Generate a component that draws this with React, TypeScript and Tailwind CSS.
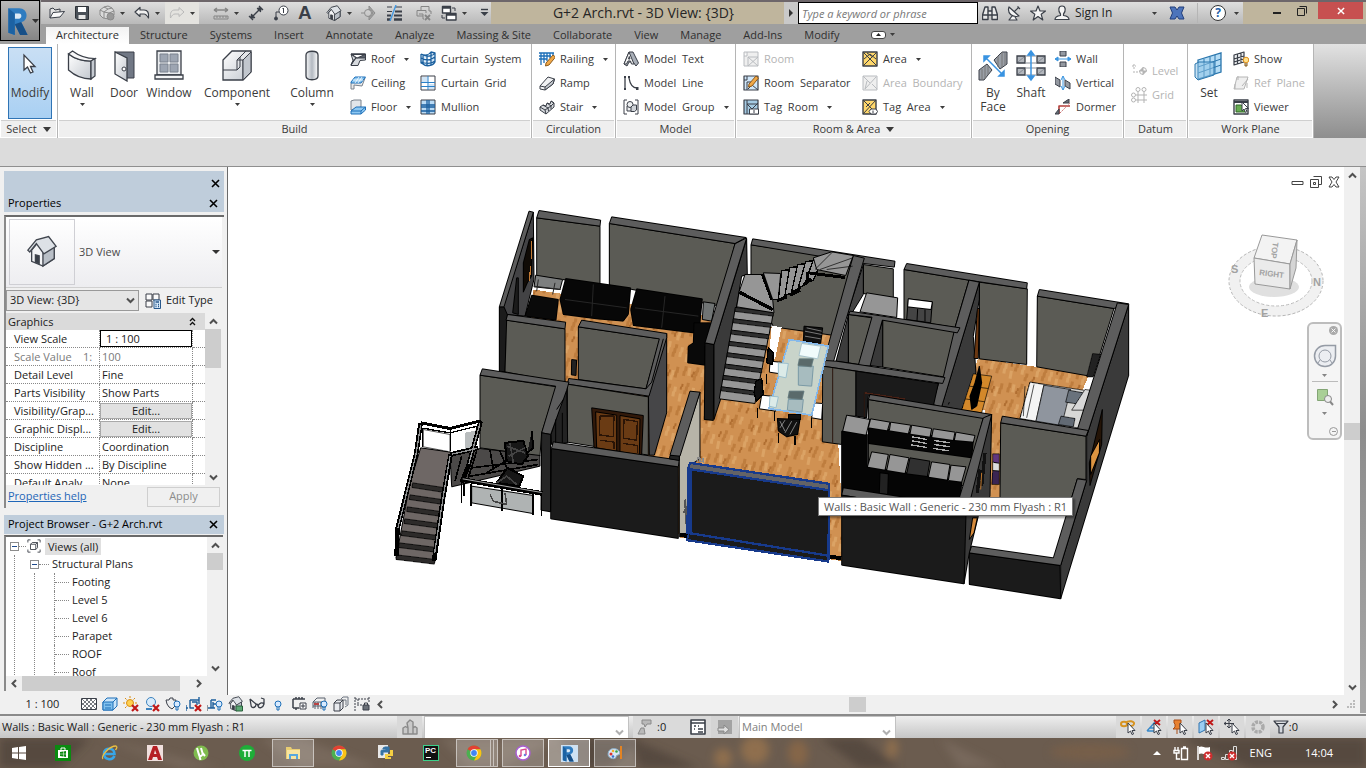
import React from "react";
import type { ReactNode } from "react";

/* ---------- icons ---------- */

const INK = "#3a3f48";
const BLUE = "#1d6fb8";

function Svg({ s = 16, vb = 16, children }: { s?: number; vb?: number; children: ReactNode }) {
  return (
    <svg width={s} height={s} viewBox={`0 0 ${vb} ${vb}`} fill="none" stroke={INK} strokeWidth={1} strokeLinejoin="round" className="shrink-0" aria-hidden="true">
      {children}
    </svg>
  );
}

const Caret = ({ className = "" }: { className?: string }) => (
  <svg width="5" height="3" viewBox="0 0 5 3" className={`shrink-0 ${className}`} aria-hidden="true">
    <path d="M0 0H5L2.5 3Z" fill="#3c3c3c" />
  </svg>
);

const XMark = ({ s = 9, c = "#000" }: { s?: number; c?: string }) => (
  <svg width={s} height={s} viewBox="0 0 9 9" className="shrink-0" aria-hidden="true">
    <path d="M1 1L8 8M8 1L1 8" stroke={c} strokeWidth="1.6" />
  </svg>
);

const Chevron = ({ dir, c = "#505050" }: { dir: "up" | "down" | "left" | "right"; c?: string }) => {
  const d = { up: "M1 6.5L4.5 3L8 6.5", down: "M1 2.5L4.5 6L8 2.5", left: "M6 1L2.5 4.5L6 8", right: "M3 1L6.5 4.5L3 8" }[dir];
  return (
    <svg width="9" height="9" viewBox="0 0 9 9" className="shrink-0" aria-hidden="true">
      <path d={d} fill="none" stroke={c} strokeWidth="2" />
    </svg>
  );
};

const house = (
  <>
    <path d="M3 8V14L9 16.5L15 12.5V6L8 2Z" fill="#f3f4f6" />
    <path d="M9 16.5V9.500L15 6V12.500Z" fill="#b9bfc7" />
    <path d="M1 8L5.500 2.500L12 .8L16 6L9.500 10L5.500 4.500L2 9Z" fill="#dde1e6" />
    <path d="M5 14.500V10.500L7 11V15.3Z" fill={INK} />
  </>
);
const redX = <path d="M9 9L15 15M15 9L9 15" stroke="#c01818" strokeWidth="2.200" />;
const bulb = (
  <>
    <circle cx="12" cy="8" r="3" fill="#d7eaff" stroke={BLUE} />
    <path d="M11 11V14H13V11" stroke={BLUE} />
  </>
);
const cursor = <path d="M8 4V14L10.500 12L12 15.500L13.500 15L12 11.500H15Z" fill="#fff" stroke={INK} />;
const pencil = <path d="M6 10L13 2L15.500 4L9 12L5.500 13Z" fill="#f0a848" stroke="#8d5a1c" />;

const I: Record<string, ReactNode> = {
  open: <><path d="M1 13V4L4 3L6 5L11 4V7" fill="#e4e4e4" /><path d="M1 13L4 7.500L15.500 6.500L11 12Z" fill="#fafafa" /></>,
  save: <><path d="M1.500 1.500H14.500V14.500H3L1.500 13Z" fill="#4a5058" stroke="#2e3238" /><path d="M4 2H12V7H4Z" fill="#fff" stroke="none" /><path d="M4.500 10H11.500V14H4.500Z" fill="#e8e8e8" stroke="none" /></>,
  sync: <g stroke="#8a8a8a"><path d="M1 5L5 2L9 1L13 3L15 6V10L10 14L4 13L1 10Z" fill="#dadada" /><path d="M1 5L5 7L9 4M5 7V13M5 7L10 8L15 6M10 8V14M9 4L13 3M9 4L5 2" /><circle cx="11.500" cy="11.500" r="3.500" fill="#999" /></g>,
  undo: <path d="M1 7L6 2.500V5H10C14 5 15 8 14.500 13C13 10.500 12 9 10 9H6V11.500Z" fill="#f0f0f0" strokeWidth="1.200" />,
  redo: <path d="M15 7L10 2.500V5H6C2 5 1 8 1.500 13C3 10.500 4 9 6 9H10V11.500Z" stroke="#b9b9b9" />,
  measure: <g stroke="#858585"><path d="M1 5H15M1 5L4 3M1 5L4 7M15 5L12 3M15 5L12 7" strokeWidth="1.500" /><path d="M1 11H15V14H1ZM4 11V13M7 11V13M10 11V13M13 11V13" /></g>,
  dim: <path d="M3 13L13 3M3 13L3.500 9.500L6.500 12.500ZM13 3L12.500 6.500L9.500 3.500ZM1 11L5 15M11 1L15 5" fill={INK} strokeWidth="1.300" />,
  tag: <><circle cx="10.500" cy="5.500" r="4.500" fill="#fff" /><path d="M9.500 4L10.500 3V8M6 7H3V12" /><circle cx="3" cy="13.500" r="1.500" fill={INK} /></>,
  house: <g transform="scale(.94)">{house}</g>,
  section: <g stroke="#8c8c8c"><circle cx="7" cy="8" r="3.500" /><path d="M0 8H3M8 1L14 8L8 15V11.500A3.500 3.500 0 0 0 8 4.500Z" fill="#a5a5a5" /></g>,
  thin: <><path d="M1 2H6M9 2H16M1 6.500H6" strokeWidth="1.200" /><path d="M9 6.500H16M1 10.500H5M8 10.500H16" strokeWidth="1.800" /><path d="M1 14.500H5M8 14.500H16" strokeWidth="2.600" /><path d="M10 0L4 16" stroke="#4398e2" strokeWidth="1.400" /></>,
  closewin: <g stroke="#858585"><path d="M5 5V1.500H13V6M1 5.500H10V8M1 5.500V11H7M3 9H7V14H8M13 6H15V9" /><path d="M9 10L14 15M14 10L9 15" strokeWidth="1.800" /></g>,
  switchwin: <><path d="M1.500 1.500H9.500V8H1.500ZM5.500 8.500H15V15H5.500ZM1.500 3H9.500M5.500 10H15" fill="#fff" strokeWidth="1.400" /><path d="M11 3H14V6M1 10V13H4" /></>,
  qat: <><path d="M5 4.500H12" strokeWidth="1.400" /><path d="M4.500 7H12.500L8.500 11Z" fill={INK} stroke="none" /></>,
  bino: <path d="M3 2H6V6H10V2H13L15.500 10V14.500H10V10H6V14.500H.5V10ZM.5 10H6M10 10H15.500M6 6V10M10 6V10" fill="#e8e8e8" strokeWidth="1.400" />,
  dish: <path d="M3 2C1 8 6 13 13 11ZM8 7L13 2M11.500 1.500L14 4M6 11L3 15H11L9 12" fill="#f5f5f5" strokeWidth="1.200" />,
  star: <path d="M8 1L10 6H15.500L11.200 9.300L12.800 15L8 11.500L3.200 15L4.800 9.300L.5 6H6Z" fill="#f4f4f4" strokeWidth="1.200" />,
  user: <path d="M8 1C4 1 4 6 6.500 9V10.500C3 11 1 12 1 14.500H15C15 12 13 11 9.500 10.500V9C12 6 12 1 8 1Z" fill="#f5f5f5" strokeWidth="1.200" />,
  exchange: <path d="M1 2H6L8 5L10 2H15L12.500 8L15 14H10L8 11L6 14H1L3.500 8Z" fill="#4d74bb" stroke="#233f7c" />,
  roof: <><path d="M1 3H15.500V9L10 9.500L8 14.500H1L3 9.500Z" fill="#d7dade" /><path d="M1 3L6 7H15.500V3ZM6 7L3 9.500L1 14Z" fill="#5b626d" /><path d="M2 3.500L7 7L15 3.500Z" fill="#fff" /></>,
  ceiling: <><path d="M1 8V14H4V10L12 11L15 3" fill="#e9e9e9" stroke="#7b828c" /><path d="M1 7L5 2H15.500L11 8H1Z" fill="#8ec8f2" stroke={BLUE} /><path d="M3 5H13M5 8L9 2M8 8L12 2" stroke="#fff" strokeWidth=".8" /></>,
  floor: <><path d="M1 2L4 1H11V8L1 11Z" fill="#e2e5e9" stroke="#7b828c" /><path d="M1 12L6 8H15.500V11L11 15H1Z" fill="#8ec8f2" stroke={BLUE} /><path d="M1 12H11L15.500 8M11 12V15" stroke={BLUE} /></>,
  curtain: <path d="M1 3C5 5 9 4 11 1L15 2V11C13 15 6 16 3 13V4M1 3V12L3 13M7 4V14.500M11 1V14M1 7C6 10 11 9 15 6M1 11C6 13 11 13 15 10M3 4C8 6 13 5 15 2" fill="#d3e7f8" stroke="#1a5f9e" strokeWidth="1.300" />,
  cgrid: <><path d="M1 1H15V15H1Z" fill="#fff" /><path d="M2 2H7.500V7.500H2ZM9 9H14V14H9Z" fill="#cfe4f6" stroke="none" /><path d="M8 1V15M1 7.500H15M1 11.500H15" stroke="#2a80c8" /></>,
  mullion: <><path d="M1 1H15V15H1Z" fill="#b9dbf6" /><path d="M7 1V15M9 1V15M1 6H15M1 8H15M1 12H15" stroke="#1a5f9e" strokeWidth="1.300" /></>,
  railing: <><path d="M0 2H15M0 5H12M2 2V14M5 2V12M8 2V10M11 2V7M14 2V5M0 8H8" stroke={BLUE} strokeWidth="1.300" /><g transform="translate(1,2)">{pencil}</g></>,
  ramp: <><path d="M1 11L9 2L15.500 4L14 9L6 15L1 14Z" fill="#f0f1f3" /><path d="M1 11L6 12V15L14 9L15.500 4L6 12" fill="#c5c9cf" /></>,
  stair: <><path d="M1 8L4 6L7 7L8 4L11 5L12 2L15 4V8L7 15L1 11Z" fill="#d7dade" /><path d="M1 8L6 11L7 15M4 6L9 9M6 11L9 9L9.500 12M8 4L12 7M9 9L12 7M12 2L15 4L12 7V10" /></>,
  mtext: <><path d="M6 1H10L15.500 12L13 15L10 11H6L4 15L1 13Z" fill="#a9afb8" /><path d="M1 13L6 1L11 13H8.500L7.500 10H5L3.500 13ZM5.500 8H7L6.300 5.500Z" fill="#f5f5f5" /></>,
  mline: <><path d="M2 3V13M6 3C7 9 9 13 14 13" strokeWidth="1.300" /><path d="M1 1H3V3H1ZM1 13H3V15H1ZM5 1H7V3H5ZM13 12H15.500V15H13Z" fill={INK} stroke="none" /></>,
  mgroup: <><path d="M4 1H1V15H4M12 1H15V15H12" /><path d="M4 7H9V12H4Z" fill="#eceef0" /><circle cx="7" cy="5.500" r="3" fill="#eceef0" /><path d="M8 8L10 6H13.500V11L11.500 12.500H8Z" fill="#cfd3d8" /></>,
  roomoff: <g stroke="#b9bcc0"><path d="M1 1H15V15H1ZM1 5H4V1M5 6H15M5 6V15M5 6L15 15M15 6L5 15" fill="#efefef" /></g>,
  roomsep: <><path d="M1 1H15V15H1Z" fill="#cfe6f9" strokeWidth="1.200" /><path d="M4 1V5H1M4 7V15M4 7H8M5 14L9 10L15 15" /><g transform="translate(0,-1)">{pencil}</g></>,
  tagroom: <><path d="M1 1H15V15H1Z" fill="#a5cbe3" strokeWidth="1.200" /><path d="M4 1V15M4 5H15M4 5L9 10L15 4" /><path d="M6.500 10H15.500V15H6.500Z" fill="#fff" /><path d="M11 11V14" /></>,
  area: <><path d="M1 1H15V15H1Z" fill="#ffd76b" strokeWidth="1.400" /><path d="M1 1L15 15M15 1L1 15M5 2L11 6M2 8L8 3L14 8" /></>,
  areab: <g stroke="#b9bcc0"><path d="M1 1H15V15H1ZM1 1L8 8M3 14L14 2M10 9L15 14M5 6L3 14" fill="#efefef" /></g>,
  tagarea: <><path d="M1 1H14V15H1Z" fill="#ffd76b" strokeWidth="1.400" /><path d="M1 1L14 14M14 1L1 15M4 8L8 4" /><path d="M9 10H14L15.500 12.500L14 15H9L7 12.500Z" fill="#fff" /><path d="M11 11.500V14" /></>,
  owall: <><path d="M5 0H11V5H5ZM5 11H11V16H5Z" fill="#9499a1" /><path d="M0 8H16M0 8L3 6V10ZM16 8L13 6V10Z" stroke="#3d96e0" fill="#3d96e0" /></>,
  overt: <><path d="M0 2L5 5V12L0 9ZM10 5L15 8V14L10 11Z" fill="#9499a1" /><path d="M8 1V15M6 5L8 1L10 5M6 11L8 15L10 11" stroke="#3d96e0" /></>,
  dormer: <><path d="M4 15V7H15" stroke="#b33f3b" strokeWidth="1.600" /><path d="M5 14L15 4" stroke="#c77" strokeDasharray="2 1" /><path d="M8 4L14 0V4ZM0 15L4 10V15Z" fill="#6a7078" /></>,
  level: <g stroke="#b3b3b3"><path d="M1 3H5M3 1V6M2 9H7" strokeDasharray="2 1" /><path d="M12 4.500L15.500 8L12 11.500L8.500 8Z" fill="#b3b3b3" /><path d="M12 8V4.500A3.500 3.500 0 0 1 15.500 8ZM12 8V11.500A3.500 3.500 0 0 1 8.500 8Z" fill="#fff" /></g>,
  grid: <g stroke="#b3b3b3"><circle cx="7" cy="2.500" r="2" /><circle cx="13" cy="2.500" r="2" /><circle cx="2.500" cy="8" r="2" /><circle cx="2.500" cy="13" r="2" /><path d="M7 5V16M13 5V16M5 8H16M5 13H16" /></g>,
  show: <><path d="M1 4L11 1V11L1 14ZM4.500 3V13M8 2V12M1 8L11 5M1 11L11 8" fill="#eceef0" strokeWidth="1.200" /><circle cx="13" cy="9" r="2.800" fill="#ffe08a" stroke="#dd8d18" /><path d="M12 12V15H14V12" fill="#ccc" stroke="#8a5a13" /></>,
  ref: <g stroke="#b5b5b5"><path d="M4 2H15L11 14H1Z" fill="#efefef" /><path d="M9 11L15 4M5 1V5M2 9V14M14 8V13" /></g>,
  viewer: <><path d="M1 1H15V15H1Z" fill="#fff" strokeWidth="1.400" /><path d="M1 3H15" strokeWidth="2" /><path d="M3 6H8L12 9V13H3Z" fill="#67ac51" stroke="#33682a" /><path d="M9 3V12L11 10L12.500 13.500L14 12.500L12.500 9.500H15.500Z" fill="#fff" /></>,
  etype: <><path d="M1 1H7V7H1ZM8 1H14V7H8ZM1 8H7V14H1Z" fill="#fafafa" /><path d="M9 7H15.500V15.500H9Z" fill="#d8eafa" stroke="#28588c" /><path d="M10.500 9H14M10.500 11.500H11.500M13 11.500H14M10.500 13.500H11.500M13 13.500H14" stroke="#28588c" strokeWidth="1.400" /></>,
  viewsall: <><path d="M1 4V1H4M12 1H15V4M15 12V15H12M4 15H1V12" /><path d="M4 6L6 4H12V10L10 12H4Z" fill="#fff" /><path d="M4 6H10V12M10 6L12 4" /></>,
  detail: <><path d="M.5 2.500H15.500V13.500H.5Z" fill="#fff" /><path d="M1 3L11 13M5 3L15 13M9 3L15 9M1 7L7 13M15 3L5 13M11 3L1 13M7 3L1 9M15 7L9 13" strokeWidth=".7" /></>,
  style: <><path d="M1 6L5 2H15V10L11 14H1Z" fill="#c9e5fa" stroke={BLUE} /><path d="M1 6H11V14H1Z" fill="#7fc0ee" stroke={BLUE} /><path d="M11 6L15 2M3 9H9M3 12H9" stroke={BLUE} /></>,
  sun: <><circle cx="7" cy="7" r="3.500" fill="#ffd04e" stroke="#d98d12" /><path d="M7 0V2M0 7H2M2 2L3.500 3.500M12 2L10.500 3.500M2 12L3.500 10.500M12 7H14" stroke="#d98d12" />{redX}</>,
  shadow: <><circle cx="7" cy="6" r="4.500" fill="#d7ebfb" stroke="#3c82be" /><path d="M2 13H8" stroke="#3c82be" strokeWidth="2" />{redX}</>,
  render: <><path d="M1 4H4L5 2H8V4H11L10 10L7 13L4 11L2 8Z" fill="#eceef0" />{bulb}</>,
  crop: <><path d="M4 4V12H8M0 12H2M4 4H13M13 1V8M0 9V15M6 6H11V9" stroke="#1d5f9c" strokeWidth="1.400" />{redX}</>,
  cropshow: <><path d="M4 4V12M1 12H8M4 4H9M6 6V12M6 8H9" strokeWidth="1.400" stroke="#1d5f9c" /><path d="M0 9V15" />{bulb}</>,
  lock3d: <><g transform="scale(.9)">{house}</g><path d="M8 10H14.500V15H8Z" fill="#5da875" stroke="#28603a" /></>,
  glasses: <path d="M1 3L7 8C7 12 2 13 2 9L1 3M7 8C9 8 9 9 9 10C10 13 14 12 15 8C13 6 10 7 9 10M15 8V3L12 2" strokeWidth="1.300" />,
  bulb: <g transform="translate(-4,0)">{bulb}</g>,
  analytic: <><path d="M2 3H14M2 12H8M2 3V12M5 3V1M8 3V1M11 3V1M5 12V14" strokeWidth="1.500" /><path d="M9 7H15V13H9ZM11 9H13V11H11Z" fill="#fff" /></>,
  worksh: <><path d="M1 6L5 2H13V12M1 6H11V12M1 10H11M3 6V13M6 6V13M9 6V13M1 6V12" stroke="#58606c" /><path d="M2 8H7" stroke="#bb4242" strokeWidth="2" />{bulb}</>,
  displace: <><path d="M8 3L10 1H15V9L12 11M10 4H13V9" stroke="#6e7682" /><path d="M1 7L4 4H10V12L7 15H1ZM1 7H7V15M7 7L10 4" fill="#e8eaee" /></>,
  reveal: <><path d="M1 1V15M15 1V6M1 3H15M4 8V3M3 9H8" strokeDasharray="2 1" /><path d="M9 9H15V14H9Z" fill="#6b7078" /><path d="M10.500 9V7H13.500V9" /></>,
  design: <g stroke="#8a8a8a" fill="#c9c9c9"><path d="M1 9L3.500 7.500L6 9V15H1ZM5 4L8 1L11 3V15H6V9ZM11 9L13 7.500L15 9V15H11Z" strokeWidth="1.400" /></g>,
  marker: <g stroke="#8a8a8a"><path d="M5 1H14V5H10L8 8L7 5H5ZM1 15L4 9H7L8 15Z" fill="#b9b9b9" /></g>,
  listing: <><path d="M1 1H15V15H1ZM1 4H15" fill="#fff" strokeWidth="1.600" /><path d="M4 7H6M4 10H5M8 10H13M8 13H13M8 7H9" strokeWidth="1.500" /></>,
  addset: <><path d="M1 1H15V15H10" fill="#9b9b9b" stroke="none" /><path d="M1 1H15V15H1Z" fill="#a3a3a3" stroke="none" /><path d="M1 9H7V6L12 10.500L7 15V12H1Z" fill="#dedede" stroke="#888" /></>,
  link: <><path d="M1 5C1 2 7 2 7 5C7 8 1 8 1 5M6 4C8 1 15 2 14 5C13 8 8 7 8 5" stroke="#d79320" strokeWidth="2" />{cursor}</>,
  under: <><path d="M1 12L9 3V8M1 12H9M4 9H9" stroke="#3989c9" strokeWidth="1.400" /><path d="M8 1L14 6M14 1L8 6" stroke="#c01818" strokeWidth="2" />{cursor}</>,
  pin: <><path d="M2 1H9V4L8 5V8L10 10H1L3 8V5L2 4ZM5 10V15" fill="#e8812f" stroke="#a94c16" />{cursor}</>,
  face: <><path d="M1 4L7 1V11L1 14Z" fill="#9bcdf2" stroke="#3074b0" /><path d="M9 1L15 6M15 1L9 6" stroke="#c01818" strokeWidth="2" />{cursor}</>,
  drag: <><path d="M5 0V9M0 4.500H10M3 2L5 0L7 2M3 7L5 9L7 7M2 3L0 4.500L2 6" />{cursor}</>,
  gear: <circle cx="8" cy="8" r="5" stroke="#aaa" strokeWidth="3.500" strokeDasharray="3 1" />,
  funnel: <path d="M1 2H15L10 8V14H6V8ZM1 2L3 4.500H13" fill="#d4d8de" strokeWidth="1.200" />,
};

const Ic = ({ n, s = 16 }: { n: string; s?: number }) => <Svg s={s}>{I[n]}</Svg>;

/* Large ribbon icons, drawn in a 30 x 32 box */
const Big: Record<string, ReactNode> = {
  modify: <path d="M9 4V19L12.500 16L15.500 22L18 21L15.500 15.500H20Z" fill="#fff" strokeWidth="1.300" />,
  wall: <><path d="M1.500 4C8 9 16 11 24 11V29C14 29 7 25 1.500 20Z" fill="url(#sheen)" strokeWidth="1.300" /><path d="M1.500 4L5.500 1C12 6 20 8.500 28 8.500L24 11C16 11 8 9 1.500 4Z" fill="#f8f8f9" strokeWidth="1.200" /><path d="M24 11L28 8.500V26L24 29Z" fill="#c5cad1" strokeWidth="1.200" /></>,
  door: <><path d="M6 2H25V28H18" fill="#717885" /><path d="M6 2L18 8V31L6 24Z" fill="url(#sheen)" strokeWidth="1.300" /><circle cx="15" cy="19" r="2" fill="#fff" /></>,
  window: <><path d="M3 1H27V25H3Z" fill="#e9ebee" strokeWidth="1.300" /><path d="M6 4H14V12H6ZM16 4H24V12H16ZM6 14H14V22H6ZM16 14H24V22H16Z" fill="#9da5b2" stroke="#7a828e" /><path d="M1 25H29V29H1Z" fill="#f4f5f6" strokeWidth="1.300" /></>,
  component: <><path d="M1 10L10 1H29V22L21 30H1Z" fill="url(#sheen)" strokeWidth="1.300" /><path d="M15 10V20H1M15 10L24 1M15 20L18 17V7M15 10H21V30M21 10L29 2" /><path d="M21 10L29 2V22L21 30Z" fill="#c1c6cd" /></>,
  column: <path d="M9 5C9 0 21 0 21 5V26C21 31 9 31 9 26Z" fill="url(#tube)" strokeWidth="1.300" />,
  byface: <><path d="M1 20L9 14L14 20L6 30H1ZM16 10L24 2H29V14L22 19Z" fill="#9a9fa7" /><path d="M4 19V30M7 16V29M10 16V25M20 6V17M24 2V17M27 3V15" stroke="#777" /><path d="M6 6L26 26M6 6L11 6L6 11ZM26 26L21 26L26 21Z" stroke="#3993e1" strokeWidth="1.500" fill="#3993e1" /></>,
  shaft: <><path d="M1 6H9V13H1ZM21 6H29V13H21ZM1 18H9V25H1ZM21 18H29V25H21Z" fill="#b2b6bc" strokeWidth="1.300" /><path d="M2 12L8 7M22 12L28 7M2 24L8 19M22 24L28 19M9 6H21M9 13H21M9 18H21M9 25H21" stroke="#858b94" /><path d="M15 2V29M12 5L15 1L18 5ZM12 26L15 30L18 26Z" stroke="#3993e1" strokeWidth="1.500" fill="#3993e1" /></>,
  set: <><path d="M4 10L27 3V22L4 29Z" fill="#b4dcf5" stroke="#2a76ad" strokeWidth="1.300" /><path d="M10 9V27M16 7V25M21 5V24M4 17L27 9M4 23L27 15" stroke="#2a76ad" /><path d="M1 14L5 12L20 12V25L4 30L1 27Z" fill="#8fc4e6" fillOpacity=".5" stroke="#2a76ad" /></>,
};

/* ---------- top bars ---------- */

function QuickBtn({ n, label, caret }: { n: string; label: string; caret?: boolean }) {
  return (
    <button aria-label={label} className="flex shrink-0 items-center gap-[5px]">
      <Ic n={n} />
      {caret && <Caret />}
    </button>
  );
}

const QatSep = () => <span className="-mx-[2px] h-full w-px bg-[#c8c8c8]" />;

function TitleBar() {
  return (
    <div className="flex h-6 border-t-2 border-[#6d666a] bg-[#bfb59d]">
      <div className="flex w-[450px] shrink-0 items-center gap-[9px] bg-linear-to-b from-[#dedede] to-[#b9b9b9] pl-2">
        <QuickBtn n="open" label="Open" />
        <QuickBtn n="save" label="Save" />
        <QuickBtn n="sync" label="Synchronize" caret />
        <QuickBtn n="undo" label="Undo" caret />
        <span className="-mx-1 flex h-full items-center bg-[#e4e3df] px-1"><QuickBtn n="redo" label="Redo" caret /></span>
        <span className="w-1" />
        <QuickBtn n="measure" label="Measure" caret />
        <QuickBtn n="dim" label="Aligned Dimension" />
        <QuickBtn n="tag" label="Tag by Category" />
        <button aria-label="Text" className="w-4 text-center font-['Liberation_Sans'] text-[19px] leading-5 font-bold text-[#3a3f48]">A</button>
        <QatSep />
        <QuickBtn n="house" label="Default 3D View" caret />
        <QuickBtn n="section" label="Section" />
        <QuickBtn n="thin" label="Thin Lines" />
        <QatSep />
        <QuickBtn n="closewin" label="Close Hidden Windows" />
        <QuickBtn n="switchwin" label="Switch Windows" caret />
        <button aria-label="Customize Quick Access Toolbar"><Ic n="qat" /></button>
      </div>
      <h1 className="min-w-0 flex-1 truncate pl-3 text-center text-sm leading-[22px] text-[#262626]">G+2 Arch.rvt - 3D View: {"{3D}"}</h1>
      <div className="flex w-[459px] shrink-0 items-center bg-linear-to-b from-[#dedede] to-[#b9b9b9]">
        <button aria-label="Expand search" className="flex h-full w-[14px] items-center justify-center bg-[#c9c9c9]">
          <svg width="4" height="8" viewBox="0 0 4 8"><path d="M0 0L4 4L0 8Z" fill="#333" /></svg>
        </button>
        <input aria-label="Search" placeholder="Type a keyword or phrase" className="h-[22px] w-[180px] border border-black bg-white px-[3px] text-[11px] italic placeholder:text-[#777]" />
        <div className="flex flex-1 items-center gap-2 pl-1">
          <QuickBtn n="bino" label="Find" />
          <QuickBtn n="dish" label="Communication Center" />
          <QuickBtn n="star" label="Favorites" />
          <button className="flex flex-1 items-center gap-[5px] text-left text-xs text-[#222]">
            <Ic n="user" /><span className="flex-1">Sign In</span><Caret className="mr-1" />
          </button>
          <QuickBtn n="exchange" label="Exchange Apps" />
          <span className="mx-1 h-5 w-px bg-[#b5b5b5]" />
          <button aria-label="Help" className="mr-1 flex items-center gap-2">
            <span className="flex h-4 w-4 items-center justify-center rounded-full border border-[#333] bg-white text-xs font-bold text-[#2560a8]">?</span>
            <Caret />
          </button>
        </div>
      </div>
      <div className="flex w-[123px] shrink-0 justify-end">
        <button aria-label="Minimize" className="flex w-6 items-center justify-center"><span className="h-[2px] w-2 bg-[#222]" /></button>
        <button aria-label="Restore" className="flex w-[26px] items-center justify-center pb-1">
          <svg width="10" height="10" viewBox="0 0 10 10" fill="none" stroke="#222"><path d="M.5 2.500H7.500V9.500H.5ZM2.500 .5H9.500V7.500" /></svg>
        </button>
        <button aria-label="Close" className="mr-[3px] ml-[3px] flex h-[17px] w-[45px] items-center justify-center bg-[#c75050]"><XMark c="#fff" s={8} /></button>
      </div>
    </div>
  );
}

const TABS = ["Architecture", "Structure", "Systems", "Insert", "Annotate", "Analyze", "Massing & Site", "Collaborate", "View", "Manage", "Add-Ins", "Modify"];

function Tabs() {
  return (
    <nav className="flex h-5 items-end bg-[#9f9f9f] pl-[5px] text-[11px] text-[#2f2f2f]">
      {TABS.map((t, i) => (
        <button key={t} className={i === 0 ? "h-[17px] bg-linear-to-b from-[#f2f2f2] to-white px-[10px] pb-[2px] leading-[15px]" : "h-[17px] px-[11px] pb-[2px] leading-[15px]"}>{t}</button>
      ))}
      <button aria-label="Minimize ribbon" className="ml-5 flex h-[17px] items-center gap-1 pb-[2px]">
        <span className="flex h-2 w-[15px] items-center justify-center rounded-[3px] border border-[#444] bg-white"><svg width="5" height="3" viewBox="0 0 5 3"><path d="M0 3L2.500 0L5 3Z" fill="#222" /></svg></span>
        <Caret />
      </button>
    </nav>
  );
}

/* ---------- ribbon ---------- */

function Panel({ title, w, caret, children }: { title: string; w: string; caret?: boolean; children: ReactNode }) {
  return (
    <section className={`flex shrink-0 flex-col border-r border-[#b5b5b5] bg-white ${w}`}>
      <div className="flex h-[76px] pt-[3px]">{children}</div>
      <div className="mx-px flex h-[17px] items-center justify-center gap-[6px] border-t border-[#cfcfcf] bg-[#efefef] text-[11px] text-[#3a3a3a]">
        {title}
        {caret && <svg width="8" height="5" viewBox="0 0 8 5"><path d="M0 0H8L4 5Z" fill="#3a3a3a" /></svg>}
      </div>
    </section>
  );
}

function BigBtn({ n, label, w, caret }: { n: string; label: ReactNode; w: string; caret?: boolean }) {
  return (
    <button className={`flex shrink-0 flex-col items-center text-xs leading-[14px] text-[#3a3a3a] ${w}`}>
      <svg width="30" height="32" viewBox="0 0 30 32" fill="none" stroke="#3a3f48" className="mt-[3px] mb-1 shrink-0" aria-hidden="true">{Big[n]}</svg>
      {label}
      {caret && <Caret className="mt-[3px]" />}
    </button>
  );
}

type Row = { n: string; t: string; caret?: boolean; off?: boolean };
function Rows({ rows, w }: { rows: Row[]; w: string }) {
  return (
    <div className={`flex shrink-0 flex-col ${w}`}>
      {rows.map((r) => (
        <button key={r.t} disabled={r.off} className={`flex h-6 items-center gap-[5px] text-[11px] whitespace-pre ${r.off ? "text-[#b4b4b4]" : "text-[#3a3a3a]"}`}>
          <Ic n={r.n} />
          <span>{r.t.replace(/ /g, "  ")}</span>
          {r.caret && <Caret className="ml-1" />}
        </button>
      ))}
    </div>
  );
}

function Ribbon() {
  return (
    <div className="flex h-[94px] bg-linear-to-b from-[#e2e2e2] to-[#8e8e8e]">
      <svg width="0" height="0" className="absolute" aria-hidden="true">
        <defs>
          <linearGradient id="sheen" x1="0" y1="0" x2="1" y2="1"><stop offset="0" stopColor="#fff" /><stop offset="1" stopColor="#c3c8cf" /></linearGradient>
          <linearGradient id="tube"><stop offset="0" stopColor="#f5f6f7" /><stop offset=".5" stopColor="#b3b9c1" /><stop offset="1" stopColor="#fff" /></linearGradient>
        </defs>
      </svg>
      <Panel title="Select" w="w-[58px]" caret>
        <button className="ml-2 flex h-[72px] w-11 flex-col items-center border border-[#2f74b5] bg-linear-to-b from-[#c9dff4] to-[#a9d0f3] text-xs leading-[14px] text-[#3a3a3a]">
          <svg width="30" height="32" viewBox="0 0 30 32" fill="none" stroke="#3a3f48" className="mt-[3px] mb-[3px]" aria-hidden="true">{Big.modify}</svg>
          Modify
        </button>
      </Panel>
      <Panel title="Build" w="w-[474px]">
        <BigBtn n="wall" label="Wall" w="w-12" caret />
        <BigBtn n="door" label="Door" w="w-9" />
        <BigBtn n="window" label="Window" w="w-[54px]" />
        <BigBtn n="component" label="Component" w="w-[82px]" caret />
        <BigBtn n="column" label="Column" w="w-[68px]" caret />
        <span className="w-1 shrink-0" />
        <Rows w="w-[70px]" rows={[{ n: "roof", t: "Roof", caret: true }, { n: "ceiling", t: "Ceiling" }, { n: "floor", t: "Floor", caret: true }]} />
        <Rows w="w-[110px]" rows={[{ n: "curtain", t: "Curtain System" }, { n: "cgrid", t: "Curtain Grid" }, { n: "mullion", t: "Mullion" }]} />
      </Panel>
      <Panel title="Circulation" w="w-[84px]">
        <span className="w-[7px]" />
        <Rows w="w-[76px]" rows={[{ n: "railing", t: "Railing", caret: true }, { n: "ramp", t: "Ramp" }, { n: "stair", t: "Stair", caret: true }]} />
      </Panel>
      <Panel title="Model" w="w-[120px]">
        <span className="w-[7px]" />
        <Rows w="w-[112px]" rows={[{ n: "mtext", t: "Model Text" }, { n: "mline", t: "Model Line" }, { n: "mgroup", t: "Model Group", caret: true }]} />
      </Panel>
      <Panel title="Room & Area" w="w-[236px]" caret>
        <span className="w-[7px]" />
        <Rows w="w-[119px]" rows={[{ n: "roomoff", t: "Room", off: true }, { n: "roomsep", t: "Room Separator" }, { n: "tagroom", t: "Tag Room", caret: true }]} />
        <Rows w="w-[108px]" rows={[{ n: "area", t: "Area", caret: true }, { n: "areab", t: "Area Boundary", off: true }, { n: "tagarea", t: "Tag Area", caret: true }]} />
      </Panel>
      <Panel title="Opening" w="w-[152px]">
        <BigBtn n="byface" label={<span className="w-8 text-center">By Face</span>} w="w-[42px]" />
        <BigBtn n="shaft" label="Shaft" w="w-[34px]" />
        <span className="w-[7px]" />
        <Rows w="w-[68px]" rows={[{ n: "owall", t: "Wall" }, { n: "overt", t: "Vertical" }, { n: "dormer", t: "Dormer" }]} />
      </Panel>
      <Panel title="Datum" w="w-[64px]">
        <div className="pt-3 pl-[7px]"><Rows w="w-14" rows={[{ n: "level", t: "Level", off: true }, { n: "grid", t: "Grid", off: true }]} /></div>
      </Panel>
      <Panel title="Work Plane" w="w-[126px]">
        <BigBtn n="set" label="Set" w="w-[42px]" />
        <span className="w-[3px] shrink-0" />
        <Rows w="w-20" rows={[{ n: "show", t: "Show" }, { n: "ref", t: "Ref Plane", off: true }, { n: "viewer", t: "Viewer" }]} />
      </Panel>
    </div>
  );
}

/* ---------- left palettes ---------- */

const VScroll = ({ thumb }: { thumb: string }) => (
  <div className="flex w-4 shrink-0 flex-col items-center bg-[#f0f0f0]">
    <div className="flex h-4 items-center"><Chevron dir="up" /></div>
    <div className={`w-full bg-[#cdcdcd] ${thumb}`} />
    <div className="mt-auto flex h-4 items-center"><Chevron dir="down" /></div>
  </div>
);

const PROPS: [string, string, string][] = [
  ["View Scale", "1 : 100", "input"],
  ["Scale Value    1:", "100", "off"],
  ["Detail Level", "Fine", ""],
  ["Parts Visibility", "Show Parts", ""],
  ["Visibility/Grap...", "Edit...", "button"],
  ["Graphic Displ...", "Edit...", "button"],
  ["Discipline", "Coordination", ""],
  ["Show Hidden ...", "By Discipline", ""],
  ["Default Analy...", "None", ""],
];

function PropertyRow({ name, value, kind }: { name: string; value: string; kind: string }) {
  const id = "prop-" + name.slice(0, 5).trim().toLowerCase().replace(/\W/g, "");
  return (
    <tr className={kind === "off" ? "h-[18px] text-[#7a7a7a]" : "h-[18px]"}>
      <th scope="row" className="w-[94px] border-r border-b border-dotted border-[#888] p-0 pl-2 text-left font-normal whitespace-pre">
        {kind === "input" ? <label htmlFor={id}>{name}</label> : name}
      </th>
      <td className="border-r border-b border-dotted border-[#888] p-0">
        {kind === "input" && <input id={id} defaultValue={value} className="block h-[17px] w-full border border-black bg-white px-[5px] text-[11px] leading-4" />}
        {kind === "button" && <button className="block h-4 w-full border border-[#a9a9a9] bg-[#e1e1e1] text-center leading-[13px]">{value}</button>}
        {kind !== "input" && kind !== "button" && <span className="pl-[2px]">{value}</span>}
      </td>
      <td className="w-3 border-b border-dotted border-[#888] p-0" />
    </tr>
  );
}

function Properties() {
  return (
    <section className="flex h-[337px] shrink-0 flex-col">
      <header className="flex h-[41px] flex-col bg-[#bfcddb] px-1 text-[11px] text-black">
        <button aria-label="Close palette" className="flex h-6 items-center justify-end"><XMark /></button>
        <div className="flex h-[17px] items-center justify-between pr-[2px]">
          <h2>Properties</h2>
          <button aria-label="Close properties"><XMark /></button>
        </div>
      </header>
      <div className="mt-[3px] flex flex-1 flex-col border-t-2 border-l-2 border-t-[#6a6a6a] border-l-[#8a8a8a]">
        <div className="mr-[2px] flex h-[71px] items-center border-b border-[#d0d0d0] bg-linear-to-b from-white to-[#ededf0] pl-[3px] text-xs">
          <span className="flex h-[66px] w-[66px] items-center justify-center border border-[#cfcfd4]">
            <svg width="32" height="34" viewBox="0 0 17 18" fill="none" stroke="#40454e" strokeWidth=".7" aria-hidden="true">{house}</svg>
          </span>
          <button className="flex flex-1 items-center justify-between pr-[2px] pl-1 text-[#4a4a4a]"><span className="text-[11px]">3D View</span><svg width="8" height="4" viewBox="0 0 8 4"><path d="M0 0H8L4 4Z" fill="#333" /></svg></button>
        </div>
        <div className="flex h-[25px] items-center bg-[#f0f0f0] text-[11px]">
          <div className="relative flex w-[133px] items-center">
            <select aria-label="View type" className="h-[21px] w-full appearance-none border border-[#999] bg-[#e5e5e5] pl-[3px] text-[11px] text-[#222]"><option>3D View: {"{3D}"}</option></select>
            <span className="pointer-events-none absolute right-1"><Chevron dir="down" /></span>
          </div>
          <button className="ml-[6px] flex items-center gap-[5px] text-[#222]"><Ic n="etype" />Edit Type</button>
        </div>
        <div className="flex h-[172px] overflow-hidden bg-white text-[11px] leading-[15px] text-[#1b1b1b]">
          <div className="min-w-0 flex-1">
            <table className="w-full table-fixed border-separate border-spacing-0">
              <thead>
                <tr className="h-[17px] bg-[#dadada]">
                  <th className="w-[94px] p-0 pl-[2px] text-left font-normal">Graphics</th>
                  <th className="p-0" aria-label="Value" />
                  <th className="w-3 p-0"><svg width="7" height="9" viewBox="0 0 7 9" className="-ml-1" fill="none" stroke="#111" strokeWidth="1.300"><path d="M1 4L3.500 1.500L6 4M1 8L3.500 5.500L6 8" /></svg></th>
                </tr>
              </thead>
              <tbody>{PROPS.map(([a, b, k]) => <PropertyRow key={a} name={a} value={b} kind={k} />)}</tbody>
            </table>
          </div>
          <VScroll thumb="h-[39px]" />
          <span className="w-[3px] bg-[#f0f0f0]" />
        </div>
        <div className="flex flex-1 items-center justify-between pr-[4px] pl-[2px] text-[11px]">
          <a href="#help" className="text-[#1f66b8] underline">Properties help</a>
          <button disabled className="h-5 w-[73px] border border-[#cfcfcf] text-[#8c8c8c]">Apply</button>
        </div>
      </div>
    </section>
  );
}

const PLANS = ["Footing", "Level 5", "Level 6", "Parapet", "ROOF", "Roof"];
const Minus = () => <span className="flex h-[9px] w-[9px] shrink-0 items-center justify-center border border-[#8c8c8c] bg-white"><span className="h-px w-[5px] bg-[#1e4a8c]" /></span>;

function Browser() {
  return (
    <section className="mt-[7px] flex min-h-0 flex-1 flex-col">
      <header className="flex h-[19px] shrink-0 items-center justify-between bg-[#bfcddb] pr-[6px] pl-1 text-[11px] text-black">
        <h2>Project Browser - G+2 Arch.rvt</h2>
        <button aria-label="Close project browser"><XMark /></button>
      </header>
      <div className="mt-px mr-px flex min-h-0 flex-1 flex-col border-t-2 border-l-2 border-t-[#6a6a6a] border-l-[#8a8a8a] bg-white text-[11px] leading-[18px] text-[#1b1b1b]">
        <div className="flex min-h-0 flex-1">
          <ul className="min-w-0 flex-1 overflow-hidden pl-1">
            <li>
              <span className="flex h-[18px] items-center"><Minus /><span className="w-[7px] border-t border-dotted border-[#888]" /><span className="mr-1 ml-px"><Ic n="viewsall" s={14} /></span><span className="bg-[#e0e0e0] px-[3px] leading-[17px]">Views (all)</span></span>
              <ul className="ml-1 border-l border-dotted border-[#888] pl-[15px]">
                <li>
                  <span className="flex h-[18px] items-center"><Minus /><span className="mr-[3px] w-[10px] border-t border-dotted border-[#888]" />Structural Plans</span>
                  <ul className="ml-1 border-l border-dotted border-[#888] pl-[19px]">
                    {PLANS.map((p, i) => (
                      <li key={p + i} className="flex h-[18px] items-center border-l border-dotted border-[#888]"><span className="mr-[3px] w-[14px] border-t border-dotted border-[#888]" />{p}</li>
                    ))}
                  </ul>
                </li>
              </ul>
            </li>
          </ul>
          <VScroll thumb="h-[17px]" />
        </div>
        <div className="flex h-[15px] shrink-0 items-center bg-[#f0f0f0]">
          <span className="flex w-4 justify-center"><Chevron dir="left" /></span>
          <span className="h-full w-[158px] bg-[#cdcdcd]" />
          <span className="ml-[10px] flex w-4 justify-center"><Chevron dir="right" /></span>
        </div>
      </div>
    </section>
  );
}

/* ---------- 3D model ---------- */

const CAP = "#5d5d5d";
const FACE = "#5b5b55";
const SIDE = "#3a3a3a";
const DARK = "#1b1b1b";
const TREAD = "#969696";
const WOOD = "url(#wood)";

type Shape = [points: string, fill: string];
const Polys = ({ items, w = 3 }: { items: Shape[]; w?: number }) => (
  <>{items.map(([p, f], i) => <polygon key={i} points={p} fill={f} stroke="#000" strokeWidth={w} />)}</>
);
const Line = ({ d, c = "#000", w = 3, f = "none" }: { d: string; c?: string; w?: number; f?: string }) => <path d={d} stroke={c} strokeWidth={w} fill={f} />;

const westRooms: Shape[] = [
  ["440,55 630,80 630,255 440,230", FACE],
  ["447,33 632,62 630,80 440,55", CAP],
  ["658,72 1035,132 990,320 658,257", FACE],
  ["665,52 1068,114 1035,132 658,72", CAP],
  ["430,38 432,240 405,350 345,345 340,322", "#434345"],
  ["418,120 428,115 425,230 412,250 400,278 400,190", "#100b06"],
  ["380,235 385,235 385,345 368,340", DARK],
  ["328,322 342,322 352,345 345,517 328,515", DARK],
  ["417,35 430,38 342,322 328,322", CAP],
  ["437,227 518,240 510,270 432,262", "#7d7f7f"],
  ["425,287 505,300 498,362 405,350", "#0a0a0a"],
  ["527,237 722,265 715,345 700,365 620,358 520,345 510,300", "#070707"],
  ["740,268 937,298 930,370 910,400 730,378 722,330", "#070707"],
  ["940,307 975,312 965,365 937,360", "#707474"],
  ["912,370 965,370 955,430 945,440 945,497 893,490 895,440 910,430", "#090909"],
  ["350,362 525,388 525,552 345,517", FACE],
  ["353,345 527,368 525,388 348,362", CAP],
  ["565,382 810,418 768,568 565,540", FACE],
  ["830,402 830,640 793,767 778,767 775,590", "#464648"],
  ["575,362 830,402 830,415 777,590 532,554 536,537 768,568 808,418 565,382", CAP],
  ["532,554 775,592 775,767 532,728", FACE],
  ["545,480 560,482 558,528 544,526", "#222"],
  ["605,625 760,648 755,767 612,744", "#31190a"],
  ["617,637 680,647 680,755 620,745", "#6a3b14"],
  ["690,648 750,658 748,766 690,757", "#6a3b14"],
  ["270,527 500,562 455,700 450,770 270,745", FACE],
  ["530,560 533,730 484,735 483,705", "#232323"],
  ["277,508 537,548 530,572 482,705 455,700 497,560 270,527", CAP],
  ["455,700 482,705 482,937 453,932", "#262626"],
  ["484,747 865,802 865,1017 482,958", DARK],
  ["490,727 868,782 865,802 484,747", CAP],
  ["930,578 930,778 895,800 890,1000 868,1012 868,768", "#b7b4a8"],
  ["840,768 868,768 868,783 838,778", "#222"],
  ["900,575 930,578 870,770 840,767", CAP],
];

const coreRooms: Shape[] = [
  ["243,76 560,122 485,347 310,322 243,165", FACE],
  ["580,135 670,148 670,240 580,222", FACE],
  ["580,135 580,225 545,282 530,290", "#444"],
  ["590,220 683,235 680,294 570,277", TREAD],
  ["535,285 607,295 567,435 535,430", FACE],
  ["535,287 535,430 498,425", "#3c3c3c"],
  ["638,300 853,333 820,472 638,443", FACE],
  ["638,300 638,443 598,438", SIDE],
  ["248,58 675,125 673,143 580,132 243,76", CAP],
  ["540,275 870,325 862,340 637,302 600,440 565,437 606,293 536,285", CAP],
  ["550,108 583,116 485,445 457,440", CAP],
  ["498,425 825,474 818,492 458,440 465,423", CAP],
  ["458,440 558,455 558,590 530,590 515,675 457,667", FACE],
  ["558,455 805,492 790,560 595,530 590,595 558,590", DARK],
  ["105,370 132,375 130,603 103,600", DARK],
  ["230,58 232,165 215,170 155,530 132,600 132,375", SIDE],
  ["195,73 230,55 132,375 105,370", CAP],
];

const eastBack: Shape[] = [
  ["192,90 387,122 345,264 192,240", FACE],
  ["418,128 562,148 560,375 418,358", FACE],
  ["200,72 562,130 560,148 412,126 387,122 192,90", CAP],
  ["592,170 822,207 760,408 738,408 590,382", FACE],
  ["598,150 866,193 822,207 592,170", CAP],
  ["418,128 418,180 400,290 408,400 365,512 305,500", SIDE],
  ["412,210 418,205 415,357 402,357", "#6b3812"],
  ["387,122 418,128 305,502 277,495", CAP],
  ["205,178 277,187 272,250 200,240", "#444"],
  ["205,178 277,187 273,210 203,202", "#fff"],
  ["308,362 316,362 305,408 297,405", "#fff"],
];

const bedroom: Shape[] = [
  ["570,428 750,455 725,567 540,537", "#d8d8d6"],
  ["570,428 612,435 588,545 540,537", "#f4f4f4"],
  ["612,437 692,450 665,558 588,545", "#8f959e"],
  ["686,452 730,460 722,495 677,488", "#69727c"],
  ["735,450 750,452 738,512 695,512", "#d8d8d8"],
  ["663,530 705,537 700,562 655,555", "#626a74"],
  ["400,403 455,410 425,520 365,512", "#d3882a"],
  ["758,342 782,345 760,412 740,412", "#222"],
  ["458,643 478,643 478,672 458,668", "#61377e"],
  ["458,668 478,672 478,695 458,693", "#ddd"],
  ["458,693 478,695 478,735 456,735", "#3b2552"],
];

const eastFront: Shape[] = [
  ["866,195 866,408 662,1078 662,978 740,722 740,590", SIDE],
  ["787,510 785,615 750,738 748,670", "#241407"],
  ["779,600 778,640 752,705 752,650", "#dc9441"],
  ["832,190 866,195 740,590 708,583", CAP],
  ["482,550 738,590 738,720 712,718 695,775 480,775", FACE],
  ["487,530 745,573 738,590 482,550", CAP],
  ["387,940 660,978 662,1078 388,1035", DARK],
  ["712,718 740,722 662,978 387,940 395,920 640,955", CAP],
];

const kitchen: Shape[] = [
  ["85,480 430,535 375,740 85,680", FACE],
  ["90,465 455,525 430,537 85,480", CAP],
  ["455,525 450,770 415,830 388,940 372,1033 372,825", SIDE],
  ["5,575 82,585 82,680 365,728 360,830 5,770", "#050505"],
  ["85,562 400,605 395,655 85,612", "#050505"],
  ["20,527 90,540 78,587 8,575", TREAD],
  ["92,538 150,548 142,574 85,565", TREAD],
  ["152,548 212,557 205,583 148,574", TREAD],
  ["215,557 275,567 270,593 210,584", TREAD],
  ["280,568 345,578 340,603 275,594", TREAD],
  ["348,578 405,588 400,608 343,603", TREAD],
  ["95,637 145,645 135,692 82,683", TREAD],
  ["150,645 207,655 195,702 140,693", TREAD],
  ["210,655 270,665 262,711 200,703", "#303030"],
  ["275,667 330,675 322,722 265,713", TREAD],
  ["333,677 378,682 365,728 325,723", TREAD],
  ["120,700 145,703 143,765 118,762", "#222"],
  ["10,745 385,803 378,825 5,767", CAP],
  ["430,535 455,525 380,825 352,795", CAP],
  ["5,767 378,825 372,1033 5,977", DARK],
  ["398,835 412,835 402,880 388,900", "#d48a3c"],
];

const flight = Array.from({ length: 8 }, (_, i) => {
  const l = 196 - 6 * i;
  const r = 310 - 7 * i;
  const y = 264 + 34 * i;
  return { tread: `${l},${y} ${r},${y + 14} ${r - 6},${y + 50} ${l - 6},${y + 36}`, riser: `${l},${y} ${r},${y + 14} ${r},${y + 26} ${l},${y + 12}` };
});

const porchSteps = Array.from({ length: 7 }, (_, i) => `${68 - 8 * i},${850 + 36 * i} ${160 - 4 * i},${864 + 36 * i} ${157 - 4 * i},${878 + 36 * i} ${66 - 8 * i},${864 + 36 * i}`);

function Model() {
  return (
    <svg viewBox="228 168 1116 527" className="h-full w-full" shapeRendering="crispEdges" strokeLinejoin="round" role="img" aria-label="3D view of the ground floor">
      <defs>
        <pattern id="wood" width="46" height="40" patternUnits="userSpaceOnUse" patternTransform="rotate(10)">
          <rect width="46" height="40" fill="#d09152" />
          <path d="M4 2L2 12M9 18L6 30M16 1L13 15M25 14L22 27M32 3L30 13M37 22L34 35M42 4L40 15M19 30L17 38" stroke="#be7d3e" strokeWidth="3" />
          <path d="M8 3L7 11M15 22L13 32M22 2L20 10M30 20L28 32M38 8L36 18M43 24L41 34M3 30L2 38" stroke="#dba365" strokeWidth="3" />
          <path d="M12 6L11 12M34 8L33 15M3 20L2 26M26 32L25 38" stroke="#b06e31" strokeWidth="2" />
        </pattern>
      </defs>
      <polygon fill={WOOD} points="533,290 720,318 735,326 780,328 832,335 845,562 680,538 648,458 560,395 560,330 532,318" />
      <polygon fill={WOOD} points="978,359 1089,375 1082,392 1010,430 1000,500 990,500 985,410 960,412" />

      <g transform="translate(390 200) scale(.33333)">
        <Polys items={westRooms} />
        <Line d="M445 240L440 275M495 250L488 285M432 260L512 270M610 255L605 350M825 290L815 385M525 300L710 325M735 325L925 350" c="#262626" />
        <Line d="M630 650H672L670 712L628 706ZM630 722L672 728V750M702 660L742 666L740 722L700 716ZM700 732L742 738V760" c="#2a1406" w={4} />
        <Line d="M422 200L418 245M425 125V180" c="#c27a34" w={4} />
        <Line d="M820 418L785 548L768 568M500 630L520 600M517 640V730M497 660V730" />
        {/* porch stair */}
        <polygon points="270,747 450,768 450,800 185,862 180,765" fill="#4b4948" stroke="#000" strokeWidth="3" />
        <Line d="M215 770L195 845M260 755L235 835M300 752L310 810M330 755L355 815M380 765L290 820M245 805L445 780M240 830L445 795" w={5} />
        <polygon points="92,745 182,758 170,860 132,1092 18,1076 60,850" fill="#6e6765" stroke="#000" strokeWidth="3" />
        {porchSteps.map((p) => <polygon key={p} points={p} fill="#2d2b2a" stroke="#000" strokeWidth="2" />)}
        <polygon points="100,690 180,705 180,757 100,742" fill="#fff" stroke="#000" strokeWidth="2" />
        <polygon points="225,700 268,690 250,745 225,755" fill="#b9bdbe" />
        <Line d="M92 670L78 765L22 990L20 1070M272 665L235 800L215 850M182 765L160 890L132 1085M182 765L265 745" w={14} />
        <Line d="M92 676L78 765L24 985M270 672L236 795M180 770L160 890L134 1060M186 764L260 747" c="#8f9192" w={4} />
        <Line d="M92 670L180 687L272 664" w={9} />
        <Line d="M98 686L180 700L262 680M182 690V755M98 685V742" w={4} />
        <Line d="M215 840L457 882" w={14} />
        <Line d="M218 838L455 879" c="#aaa" w={3} />
        <polygon points="245,860 430,888 428,942 245,910" fill="#afb3b3" stroke="#000" strokeWidth="3" />
        <Line d="M215 850V912M243 855V920M337 870V935M430 885V948M455 885V950M223 850V890" w={5} />
        <Line d="M345 730L400 724L414 770L395 795L350 785ZM352 805L400 830L388 860L320 850ZM412 760L430 745L425 695" f="#171717" w={6} />
        <Line d="M350 740L405 760M360 730L370 790M320 850L350 830L380 855M300 885L310 905L350 915L345 880M355 770L405 745" c="#444" w={5} />
      </g>

      <g transform="translate(840 240) scale(.33333)">
        <Polys items={eastBack} />
        <Line d="M233 208L231 244M255 210V246M325 495L328 488" />
        <Polys items={bedroom} w={2} />
        <Line d="M418 380L425 430L410 500L395 510L390 470L405 430Z" f="#000" />
        <Line d="M375 478L435 487M388 440L445 447M555 440L550 530M582 435L560 535" w={2} />
        <Polys items={eastFront} />
      </g>

      <g transform="translate(670 220) scale(.33333)">
        <Polys items={coreRooms} />
        <Line d="M488 446V670M583 592V519L707 538" c="#2b1710" w={3} />
        <Line d="M585 520L705 539" c="#4a2216" w={4} />
        <polygon points="305,320 335,322 315,420 298,400" fill="#fff" />
        {/* interior stair */}
        {flight.map((s) => (
          <g key={s.tread}>
            <polygon points={s.tread} fill={TREAD} stroke="#000" strokeWidth="3" />
            <polygon points={s.riser} fill="#2f2f2f" stroke="#000" strokeWidth="2" />
          </g>
        ))}
        <polygon points="225,165 280,165 308,240 312,280 200,262 208,215" fill={TREAD} stroke="#000" strokeWidth="3" />
        <Line d="M208 218L308 270M278 165L306 240" w={10} />
        <polygon points="280,160 332,162 325,240 308,240" fill={TREAD} stroke="#000" strokeWidth="3" />
        {[0, 1, 2, 3, 4].map((i) => (
          <polygon key={i} points={`${335 + i * 24},${153 - i * 9} ${362 + i * 24},${150 - i * 9} ${350 + i * 20},${230 - i * 12} ${325 + i * 20},${240 - i * 12}`} fill={TREAD} stroke="#000" strokeWidth="4" />
        ))}
        <polygon points="485,97 550,108 527,168 440,150 430,115" fill={TREAD} stroke="#000" strokeWidth="3" />
        <Line d="M435 150L487 98M450 150L548 115M470 150L548 140" w={2} />
        <Line d="M415 160L525 174M412 158V185M425 178L400 195M320 244L350 232M360 228L390 212" w={9} />
        {/* dining set */}
        <Line d="M402 320L458 325L452 372L400 365Z" f="#111" />
        <Line d="M405 335L455 345M405 350L452 358M410 325L455 335" c="#aaa" w={2} />
        <Line d="M300 425L350 430L345 465L298 458ZM275 527L325 532L318 575L268 568ZM430 550L458 552L455 600L425 595Z" f="#fff" />
        <Line d="M295 385L310 400L308 435L290 430ZM258 485L275 478L280 525L260 545L252 520ZM345 462V500M262 565V595M313 575V605M425 595V625M290 465V495M355 585H392V600H355Z" f="#111" w={4} />
        <polygon points="358,360 475,380 425,587 297,567" fill="#c9d4ca" stroke="#86b9ea" strokeWidth="5" />
        <Line d="M395 372L452 380L443 418L387 408Z" c="#a9c4cc" f="#f1fbfb" />
        <Line d="M385 440H430L425 500L385 497ZM355 540H400L396 578L352 572Z" c="#7a9aa6" f="#a7bcbf" />
        <Line d="M388 418H430L424 442L384 438ZM358 515H402L396 540L354 536Z" c="#667c80" f="#5a6a6b" />
        <Line d="M325 430L355 432L348 475L325 470ZM300 530L325 532L318 565L298 560Z" c="#9bbfcd" f="#dcebe8" />
        <Line d="M322 597L390 600L383 645L350 652L325 635Z" f="#111" />
        <Line d="M330 605L345 635M345 602L330 625M365 605L345 640M380 608L360 645" c="#bbb" w={2} />
        <Line d="M326 640V672M375 650V678" w={4} />
        {/* highlighted wall */}
        <Line d="M82 728V716H90V728M95 728L100 716V730" c="#8a8a8a" w={4} />
        <Line d="M45 840L50 920M40 880L52 860" c="#555" w={6} />
        <polygon points="52,748 475,812 472,1028 52,962" fill={DARK} />
        <polygon points="60,730 478,793 475,812 55,748" fill="#636366" />
        <Line d="M55 748L60 730L478 793L475 1026L52 962ZM52 748L475 812M62 750V940M52 940L472 1008" c="#173a8c" w={7} />
        <Line d="M480 1012L514 1016M30 945L52 950" w={12} />
      </g>

      <g transform="translate(840 240) scale(.33333)">
        <Polys items={kitchen} />
        <Line d="M215 592L262 600M215 604L262 612M213 616L260 624M282 603L330 610M282 615L330 622M280 627L328 634" c="#aaa" w={4} />
        <Line d="M435 640L425 740M420 690L412 760" c="#111" w={10} />
        <Line d="M425 700L422 750" c="#c0772d" w={3} />
      </g>
    </svg>
  );
}

function ViewCube() {
  return (
    <svg width="104" height="90" viewBox="0 0 104 90" className="absolute top-[67px] right-[13px]" aria-label="View cube" role="img">
      <ellipse cx="49" cy="47" rx="41" ry="30" fill="none" stroke="#f1f1f1" strokeWidth="11" />
      <ellipse cx="49" cy="47" rx="47" ry="35" fill="none" stroke="#b5b5b5" strokeDasharray="3 2" />
      <ellipse cx="49" cy="47" rx="36" ry="25" fill="#fff" stroke="#bcbcbc" strokeDasharray="3 2" />
      <ellipse cx="47" cy="53" rx="25" ry="10" fill="#e0e0e0" />
      <g stroke="#999">
        <path d="M35 1L70 6L63 30L27 24Z" fill="#f3f3f3" />
        <path d="M27 24L63 30V55L28 50Z" fill="#ebebeb" />
        <path d="M63 30L70 6L69 34L63 55Z" fill="#d5d5d5" />
      </g>
      <g fontFamily="Liberation Sans" fontWeight="bold" fill="#a2a2a2">
        <text x="32" y="41" fontSize="8" transform="rotate(7 32 41)">RIGHT</text>
        <text x="46" y="8" fontSize="8" transform="rotate(98 46 8)">TOP</text>
        <text x="4" y="39" fontSize="11">S</text>
        <text x="34" y="83" fontSize="11">E</text>
        <text x="86" y="52" fontSize="11">N</text>
      </g>
    </svg>
  );
}

function NavBar() {
  return (
    <div className="absolute top-[155px] right-[2px] flex h-[118px] w-[35px] flex-col items-center rounded-md border-2 border-[#bdbdbd] bg-[#f5f5f5]">
      <button aria-label="Close navigation bar" className="mt-[2px] mr-[2px] flex h-[9px] w-[9px] items-center justify-center self-end rounded-full bg-[#aaa]"><XMark s={5} c="#fff" /></button>
      <button aria-label="Steering wheel" className="mt-[9px]">
        <svg width="24" height="24" viewBox="0 0 24 24" fill="#eceef2" stroke="#959ba5"><path d="M12 1.500H22.500V12A10.500 10.500 0 1 1 12 1.500Z" strokeWidth="1.500" /><circle cx="12" cy="12" r="6" /><path d="M7 16L5 19M17 16L19 19" /></svg>
      </button>
      <Caret className="mt-[6px] opacity-60" />
      <span className="mt-1 w-[26px] border-t border-[#bbb]" />
      <button aria-label="Zoom" className="mt-[6px]">
        <svg width="18" height="18" viewBox="0 0 18 18"><path d="M1.500 1.500H11.500V12.500H1.500Z" fill="#a9cf96" stroke="#83a575" /><circle cx="12" cy="11" r="3.500" fill="#eee" stroke="#888" /><path d="M14 13.500L17 17" stroke="#888" strokeWidth="2" /></svg>
      </button>
      <Caret className="mt-[6px] opacity-60" />
      <span className="mt-auto mr-[2px] mb-[2px] flex h-[9px] w-[9px] items-center justify-center self-end rounded-full border border-[#999]"><span className="h-px w-1 bg-[#999]" /></span>
    </div>
  );
}

function Canvas() {
  return (
    <main className="relative min-w-0 flex-1 overflow-hidden bg-white">
      <Model />
      <div className="absolute top-[9px] right-1 flex gap-[6px]">
        <svg width="13" height="12" viewBox="0 0 13 12"><path d="M1 5.500H12V8.500H1Z" fill="#fff" stroke="#444" /></svg>
        <svg width="12" height="12" viewBox="0 0 12 12" fill="#fff" stroke="#444"><path d="M3.500 .5H11.500V8.500H9M.5 3.500H8.500V11.500H.5ZM3.500 6.500H5.500V8.500H3.500Z" /></svg>
        <svg width="12" height="12" viewBox="0 0 12 12" fill="#fff" stroke="#444"><path d="M1 1H4L6 3.500L8 1H11L8 6L11 11H8L6 8.500L4 11H1L4 6Z" /></svg>
      </div>
      <ViewCube />
      <NavBar />
      <div role="tooltip" className="absolute top-[330px] left-[590px] border border-[#777] bg-white px-[5px] text-[11px] leading-[17px] whitespace-nowrap text-[#555] shadow-[2px_2px_2px_rgba(0,0,0,0.4)]">
        Walls : Basic Wall : Generic - 230 mm Flyash : R1
      </div>
    </main>
  );
}

/* ---------- bottom bars ---------- */

const VIEW_TOOLS = ["detail", "style", "sun", "shadow", "render", "crop", "cropshow", "lock3d", "glasses", "bulb", "analytic", "worksh", "displace", "reveal"];

function ViewBar() {
  return (
    <div className="flex h-[19px] shrink-0 items-center bg-[#f0f0f0] pb-px text-[11px] text-[#1b1b1b]">
      <button className="w-[81px] pl-1 text-center">1 : 100</button>
      <div className="flex gap-[5px]">
        {VIEW_TOOLS.map((n) => <button key={n} aria-label={n}><Ic n={n} /></button>)}
      </div>
      <span className="ml-[6px]"><Chevron dir="left" /></span>
      <div className="flex h-[15px] flex-1 items-center justify-end">
        <span className="h-full w-[17px] bg-[#cdcdcd]" />
        <span className="w-[464px]" />
        <Chevron dir="right" />
      </div>
      <span className="flex w-[21px] justify-end pr-1 text-[#bbb]"><svg width="9" height="9" viewBox="0 0 9 9" fill="#bbb"><path d="M6 0H8V2H6ZM6 3H8V5H6ZM3 3H5V5H3ZM6 6H8V8H6ZM3 6H5V8H3ZM0 6H2V8H0Z" /></svg></span>
      <span className="h-full w-[6px] bg-[#a5a5a5]" />
    </div>
  );
}

function StatusBar() {
  return (
    <div className="flex h-6 shrink-0 items-center border-t-2 border-[#8a8a8a] bg-linear-to-b from-[#eeeeee] to-[#c6c6c6] text-[11px] text-[#1b1b1b]">
      <p className="w-[397px] shrink-0 pl-[2px] whitespace-nowrap">Walls : Basic Wall : Generic - 230 mm Flyash : R1</p>
      <button aria-label="Worksets" className="flex h-full w-[25px] items-center justify-center bg-[#d9d9d9]"><Ic n="design" /></button>
      <div className="relative ml-[2px] flex h-full w-[205px] items-end border border-b-0 border-[#c2c2c2] bg-white">
        <select aria-label="Active workset" className="h-full w-full appearance-none bg-white"><option> </option></select>
        <span className="pointer-events-none absolute right-1 bottom-[1px]"><Chevron dir="down" c="#b0b0b0" /></span>
      </div>
      <button className="ml-1 flex h-full w-[52px] items-center gap-1 bg-[#dadada] pl-1"><Ic n="marker" />:0</button>
      <button aria-label="Design options" className="flex h-full w-[26px] items-center justify-center bg-[#dadada]"><Ic n="listing" /></button>
      <button aria-label="Add to set" className="flex h-full w-[27px] items-center justify-center bg-[#d4d4d4]"><Ic n="addset" /></button>
      <div className="relative ml-px flex h-full w-[157px] border border-b-0 border-[#c2c2c2] bg-white">
        <select aria-label="Design option" className="h-full w-full appearance-none bg-white pl-[2px] text-[11px] text-[#808080]"><option>Main Model</option></select>
        <span className="pointer-events-none absolute right-1 bottom-[1px]"><Chevron dir="down" c="#b0b0b0" /></span>
      </div>
      <div className="ml-auto flex h-full items-center gap-[2px]">
        {["link", "under", "pin", "face", "drag", "gear"].map((n) => <button key={n} aria-label={n} className="flex h-full w-6 items-center justify-center bg-[#dadada]"><Ic n={n} /></button>)}
      </div>
      <button className="mr-[68px] ml-[3px] flex items-center"><Ic n="funnel" />:0</button>
    </div>
  );
}

const chrome = (
  <svg width="16" height="16" viewBox="0 0 16 16"><circle cx="8" cy="8" r="7.500" fill="#4caf50" /><path d="M8 8L1.500 4.300A7.500 7.500 0 0 1 14.500 4.300H8Z" fill="#e34133" /><path d="M8 4.300H14.500A7.500 7.500 0 0 1 8 15.500L11.300 9.800Z" fill="#fbc116" /><circle cx="8" cy="8" r="3.700" fill="#fff" /><circle cx="8" cy="8" r="2.900" fill="#4285f4" /></svg>
);
const rLogo = (
  <>
    <path d="M3 2H13C22 2 22 14 15 15L21 27H14L9 17V27L3 25Z" fill="#2f7cc0" />
    <path d="M9 7H13C16 7 16 12 12 12H9Z" fill="#dceaf6" />
    <path d="M15 15L21 27H14L9 17Z" fill="#174f87" />
    <path d="M3 2L9 7V27L3 25Z" fill="#1c62a3" />
  </>
);

type Task = { name: string; state?: "open" | "active"; stacked?: boolean; icon: ReactNode };
const TASKS: Task[] = [
  { name: "Store", icon: <svg width="16" height="16" viewBox="0 0 16 16"><rect width="16" height="16" fill="#0a8a10" /><path d="M3 5H13V13H3Z" fill="#fff" /><path d="M6 5V3H10V5" stroke="#fff" fill="none" /><path d="M5 7L8 6.500V8.800H5ZM8.500 6.500L11 6V8.800H8.500ZM5 9.200H8V11.500L5 11ZM8.500 9.200H11V12L8.500 11.500Z" fill="#0a8a10" /></svg> },
  { name: "Internet Explorer", icon: <svg width="17" height="16" viewBox="0 0 17 16"><path d="M13.500 11C11 16 3 15 3 8.500C3 2 13.500 2 13.500 9H4" fill="none" stroke="#38a6e8" strokeWidth="2.600" /><path d="M2 14C-1 12 8 1 15 1C17 2 15 4 14.500 5" fill="none" stroke="#e9bf43" strokeWidth="1.300" /></svg> },
  { name: "AutoCAD", icon: <svg width="16" height="16" viewBox="0 0 16 16"><rect width="16" height="16" fill="#f0e0de" /><path d="M1 15L6 1H10L15 15H11L10 12H6L5 15ZM7 9H9.500L8 5Z" fill="#b51f24" /></svg> },
  { name: "uTorrent", icon: <svg width="16" height="16" viewBox="0 0 16 16"><circle cx="8" cy="8" r="7.500" fill="#7fbb4e" /><path d="M4 3L6 10C7 12 10 11 9.500 8L8 3M9.500 8L12 11M6 9L7.500 15" stroke="#fff" strokeWidth="2" fill="none" /></svg> },
  { name: "Pi", icon: <svg width="16" height="16" viewBox="0 0 16 16"><circle cx="8" cy="8" r="8" fill="#1ead38" /><path d="M3.500 5.500H12.500M6 5.500V12M10 5.500V12" stroke="#fff" strokeWidth="1.500" /></svg> },
  { name: "File Explorer", state: "open", icon: <svg width="17" height="16" viewBox="0 0 17 16"><path d="M1 2H6L7 4H15V14H1Z" fill="#e9cd72" /><path d="M2 5H15V14H2Z" fill="#f7e5a0" /><path d="M4 14V9H13V14H11V11H6V14Z" fill="#57a8dd" /></svg> },
  { name: "Chrome", icon: chrome },
  { name: "Python", icon: <svg width="17" height="16" viewBox="0 0 17 16"><path d="M1 0H11V13H1Z" fill="#e8e8e8" /><path d="M8 2H12V7H6V10H4V6C4 5 5 5 9 5V4H6V3Z" fill="#3572a5" stroke="#3572a5" /><path d="M13 5H16V11H11V12H14V14H8V9H13Z" fill="#f5cf42" /></svg> },
  { name: "PyCharm", icon: <svg width="16" height="16" viewBox="0 0 16 16"><rect x=".5" y=".5" width="15" height="15" fill="#111" stroke="#3bd089" /><text x="2" y="8" fontFamily="Liberation Sans" fontWeight="bold" fontSize="8" fill="#fff">PC</text><path d="M3 12.500H8" stroke="#fff" /></svg> },
  { name: "Chrome window", state: "open", stacked: true, icon: chrome },
  { name: "iTunes", state: "open", icon: <svg width="16" height="16" viewBox="0 0 16 16"><circle cx="8" cy="8" r="7" fill="#fff" stroke="#a85ed2" strokeWidth="1.500" /><path d="M6 11V5L11 4V10" fill="none" stroke="#d94b90" strokeWidth="1.400" /><circle cx="5" cy="11" r="1.300" fill="#d94b90" /><circle cx="10" cy="10" r="1.300" fill="#6d7be0" /></svg> },
  { name: "Revit", state: "active", icon: <svg width="17" height="17" viewBox="0 0 28 28"><rect width="28" height="28" fill="#cfe2f3" />{rLogo}</svg> },
  { name: "Paint", state: "open", icon: <svg width="17" height="16" viewBox="0 0 17 16"><path d="M1 9C1 2 12 2 13 8C13 11 9 9 9 12C9 15 1 14 1 9Z" fill="#d9e8f5" stroke="#85a9c5" /><circle cx="4" cy="9" r="1.500" fill="#d93333" /><circle cx="6" cy="6" r="1.300" fill="#f1b22d" /><circle cx="9.500" cy="6.500" r="1.300" fill="#3aa04b" /><circle cx="6" cy="11.500" r="1.300" fill="#3b6fd0" /><path d="M14 1V14" stroke="#e38322" strokeWidth="2" /></svg> },
];

function TaskBar() {
  return (
    <footer className="relative flex h-[30px] shrink-0 items-center overflow-hidden bg-[#6b5c4f] text-white">
      <svg className="absolute inset-0 h-full w-full" viewBox="0 0 1366 30" preserveAspectRatio="none" aria-hidden="true">
        <defs><filter id="soft" x="-5%" y="-50%" width="110%" height="200%"><feGaussianBlur stdDeviation="4" /></filter></defs>
        <g filter="url(#soft)" opacity=".65">
          <path d="M0 0H90L60 30H0ZM560 0H640L610 30H580ZM630 0L700 30H640ZM820 0H860L900 30H860ZM1180 0H1366V30H1250Z" fill="#4c4038" />
          <path d="M100 0L220 30H180ZM260 0H300L380 30H300ZM440 0H560L500 30H470ZM940 0L1000 30H960Z" fill="#7f7064" />
          <ellipse cx="723" cy="20" rx="9" ry="10" fill="#a3794e" />
          <ellipse cx="755" cy="12" rx="14" ry="14" fill="#a3794e" />
          <ellipse cx="798" cy="15" rx="10" ry="13" fill="#946c45" />
          <ellipse cx="892" cy="10" rx="6" ry="10" fill="#a3794e" />
          <ellipse cx="1090" cy="14" rx="40" ry="9" fill="#7d6147" />
        </g>
      </svg>
      <div className="relative flex h-full items-center gap-1">
        <button aria-label="Start" className="flex h-[28px] w-[38px] items-center justify-center">
          <svg width="14" height="14" viewBox="0 0 14 14"><path d="M0 2L6 1V6.500H0ZM7 1L14 0V6.500H7ZM0 7.500H6V13L0 12ZM7 7.500H14V14L7 13Z" fill="#fff" /></svg>
        </button>
        {TASKS.map((t) => (
          <button key={t.name} aria-label={t.name} className={`flex h-[28px] w-[42px] items-center justify-center border ${t.state === "active" ? "border-white bg-white/35" : t.state === "open" ? "border-white/50 bg-white/20" : "border-transparent"}`}>
            {t.stacked ? (
              <span className="flex h-full w-full items-center">
                <span className="flex h-full flex-1 items-center justify-center border-r border-white/50">{t.icon}</span>
                <span className="h-full w-[3px] border-r border-white/50" />
                <span className="w-[3px]" />
              </span>
            ) : t.icon}
          </button>
        ))}
      </div>
      <div className="relative ml-auto flex items-center gap-2 text-[11px]">
        <svg width="8" height="4" viewBox="0 0 8 4"><path d="M0 4L4 0L8 4Z" fill="#fff" /></svg>
        <svg width="16" height="16" viewBox="0 0 16 16" fill="none" stroke="#fff" className="ml-1"><path d="M8.500 3.500H14.500V14.500H8.500ZM10 2H13M2 2V5M5 2V5M1 5.500H6V8H1ZM3.500 8V14H7" strokeWidth="1.400" /></svg>
        <svg width="16" height="16" viewBox="0 0 16 16"><path d="M1 1V15" stroke="#fff" strokeWidth="1.500" /><path d="M2 2C6 0 7 4 13 2V9C7 11 6 7 2 9Z" fill="#fff" /><circle cx="11" cy="11" r="4.500" fill="#cf2d2d" /><path d="M9 9L13 13M13 9L9 13" stroke="#fff" strokeWidth="1.400" /></svg>
        <svg width="17" height="16" viewBox="0 0 17 16"><path d="M.5 12.500H3.500V14.500H.5ZM4.500 9.500H7.500V14.500H4.500ZM8.500 5.500H11.500V14.500H8.500ZM12.500 1.500H15.500V14.500H12.500Z" fill="none" stroke="#ddd" /><circle cx="11" cy="11" r="4.500" fill="#cf2d2d" /><path d="M9 9L13 13M13 9L9 13" stroke="#fff" strokeWidth="1.400" /></svg>
        <span className="mr-[25px] ml-1">ENG</span>
        <time className="pr-[33px]">14:04</time>
      </div>
    </footer>
  );
}

export default function App() {
  return (
    <div className="flex h-screen flex-col overflow-hidden bg-[#f0f0f0] font-['Open_Sans',sans-serif]">
      <div className="flex shrink-0 bg-[#9f9f9f]">
        <button aria-label="Application menu" className="flex h-[41px] w-10 shrink-0 items-center gap-px border border-black bg-linear-to-b from-[#b9b9b9] to-[#858585] pl-1">
          <svg width="26" height="30" viewBox="0 0 24 28">{rLogo}</svg>
          <svg width="7" height="4" viewBox="0 0 7 4"><path d="M0 0H7L3.500 4Z" fill="#333" /></svg>
        </button>
        <div className="ml-px min-w-0 flex-1">
          <TitleBar />
          <Tabs />
        </div>
      </div>
      <Ribbon />
      <div className="h-[29px] shrink-0 border-b border-[#8f8f8f] bg-[#dcdcdc]" />
      <div className="flex min-h-0 flex-1">
        <aside className="flex w-[228px] shrink-0 flex-col border-r border-[#6a6a6a] bg-[#f0f0f0] pt-1 pr-[3px] pb-1 pl-1">
          <Properties />
          <Browser />
        </aside>
        <Canvas />
        <div className="flex w-4 shrink-0 flex-col items-center bg-[#f0f0f0]">
          <span className="flex h-4 items-center"><Chevron dir="up" /></span>
          <span className="mt-[240px] h-[17px] w-full bg-[#cdcdcd]" />
          <span className="mt-auto flex h-4 items-center"><Chevron dir="down" /></span>
        </div>
        <span className="w-[6px] shrink-0 bg-linear-to-b from-[#c5c5c5] via-[#8d8d8d] to-[#a5a5a5]" />
      </div>
      <ViewBar />
      <StatusBar />
      <TaskBar />
    </div>
  );
}
